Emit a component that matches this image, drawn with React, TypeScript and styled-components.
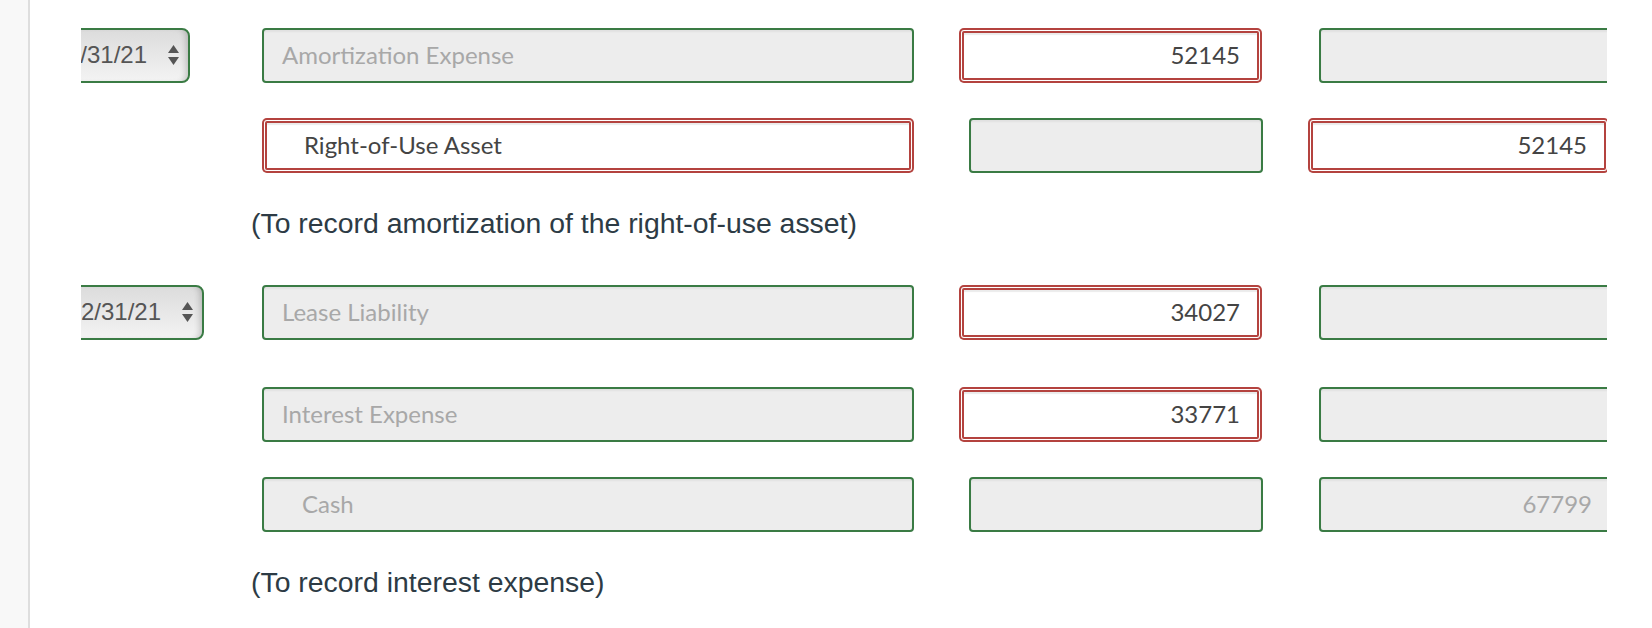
import React from 'react';
import styled, { createGlobalStyle } from 'styled-components';

const GREEN = '#3a7b44';
const RED = '#b4433f';

const Global = createGlobalStyle`
  html, body { margin: 0; padding: 0; background: #fff; }
  body { font-family: Lato, "Noto Sans", sans-serif; }
  * { box-sizing: border-box; }
`;

const Page = styled.div`
  display: flex;
  width: 1652px;
  height: 628px;
  overflow: hidden;
  background: #fff;
`;

const SideRail = styled.div`
  flex: none;
  width: 30px;
  background: #f8f8f8;
  border-right: 2px solid #dedede;
`;

const Sheet = styled.div`
  flex: none;
  width: 1526px;
  margin-left: 51px;
  padding-top: 27px;
  overflow: hidden;
  display: flex;
  flex-direction: column;
`;

const Row = styled.div<{ $gap: number }>`
  display: grid;
  grid-template-columns: 136px 652px 304px 303px;
  column-gap: 45px;
  height: 56px;
  align-items: center;
  margin-top: ${(p) => p.$gap}px;
`;

const DateClip = styled.div<{ $w: number }>`
  width: ${(p) => p.$w}px;
  height: 55px;
  overflow: hidden;
  display: flex;
  justify-content: flex-end;
`;

const DateSelect = styled.div`
  flex: none;
  height: 55px;
  display: flex;
  align-items: center;
  gap: 21px;
  padding: 0 9px 0 24px;
  border: 2px solid ${GREEN};
  border-radius: 8px;
  background: linear-gradient(#dcdcdc, #f3f3f3);
  box-shadow: inset -6px 0 6px -4px rgba(0, 0, 0, 0.2);
  font-family: "Liberation Sans", Arial, sans-serif;
  font-size: 24px;
  color: #555;
  white-space: nowrap;
`;

const Stepper = () => (
  <svg width="11" height="20" viewBox="0 0 11 20" aria-hidden>
    <path d="M0 8 L5.5 0 L11 8 Z" fill="#555" />
    <path d="M0 12 L11 12 L5.5 20 Z" fill="#555" />
  </svg>
);

type Col = 'acct' | 'debit' | 'credit';

const greenMargin: Record<Col, string> = {
  acct: '0',
  debit: '0 0 0 10px',
  credit: '0 0 0 11px',
};
const redMargin: Record<Col, string> = {
  acct: '0 3px',
  debit: '0 4px 0 3px',
  credit: '0 5px 0 3px',
};

const Field = styled.div<{ $col: Col; $err?: boolean; $indent?: boolean }>`
  height: ${(p) => (p.$err ? 49 : 55)}px;
  margin: ${(p) => (p.$err ? redMargin[p.$col] : greenMargin[p.$col])};
  display: flex;
  align-items: center;
  justify-content: ${(p) => (p.$col === 'acct' ? 'flex-start' : 'flex-end')};
  padding: ${(p) =>
    p.$col === 'acct'
      ? `0 0 2px ${p.$indent ? (p.$err ? 37 : 38) : 18}px`
      : '0 17px 2px 0'};
  border: 2px solid ${(p) => (p.$err ? RED : GREEN)};
  border-radius: ${(p) => (p.$err ? 2 : 4)}px;
  background: ${(p) => (p.$err ? '#fff' : '#ededed')};
  box-shadow: ${(p) =>
    p.$err
      ? `inset 0 3px 1px -1px #ebebeb, 0 0 0 1px #fff, 0 0 0 3px ${RED}`
      : 'inset 0 2px 2px rgba(0,0,0,0.05)'};
  font-family: Lato, "Noto Sans", sans-serif;
  font-size: 24px;
  color: ${(p) => (p.$err ? '#444' : '#a8a8a8')};
  white-space: nowrap;
  overflow: hidden;
`;

const Note = styled.p<{ $gap: number }>`
  margin: ${(p) => p.$gap}px 0 0 170px;
  font-family: "Liberation Sans", Arial, sans-serif;
  font-size: 28.4px;
  line-height: 32px;
  color: #2d3b45;
  white-space: nowrap;
`;

const Empty = styled.div``;

export default function App() {
  return (
    <>
      <Global />
      <Page>
        <SideRail />
        <Sheet>
          <Row $gap={0}>
            <DateClip $w={109}>
              <DateSelect>
                <span>12/31/21</span>
                <Stepper />
              </DateSelect>
            </DateClip>
            <Field $col="acct">Amortization Expense</Field>
            <Field $col="debit" $err>52145</Field>
            <Field $col="credit"></Field>
          </Row>
          <Row $gap={34}>
            <Empty />
            <Field $col="acct" $err $indent>Right-of-Use Asset</Field>
            <Field $col="debit"></Field>
            <Field $col="credit" $err>52145</Field>
          </Row>
          <Note $gap={34}>(To record amortization of the right-of-use asset)</Note>

          <Row $gap={45}>
            <DateClip $w={123}>
              <DateSelect>
                <span>12/31/21</span>
                <Stepper />
              </DateSelect>
            </DateClip>
            <Field $col="acct">Lease Liability</Field>
            <Field $col="debit" $err>34027</Field>
            <Field $col="credit"></Field>
          </Row>
          <Row $gap={46}>
            <Empty />
            <Field $col="acct">Interest Expense</Field>
            <Field $col="debit" $err>33771</Field>
            <Field $col="credit"></Field>
          </Row>
          <Row $gap={34}>
            <Empty />
            <Field $col="acct" $indent>Cash</Field>
            <Field $col="debit"></Field>
            <Field $col="credit">67799</Field>
          </Row>
          <Note $gap={34}>(To record interest expense)</Note>
        </Sheet>
      </Page>
    </>
  );
}
